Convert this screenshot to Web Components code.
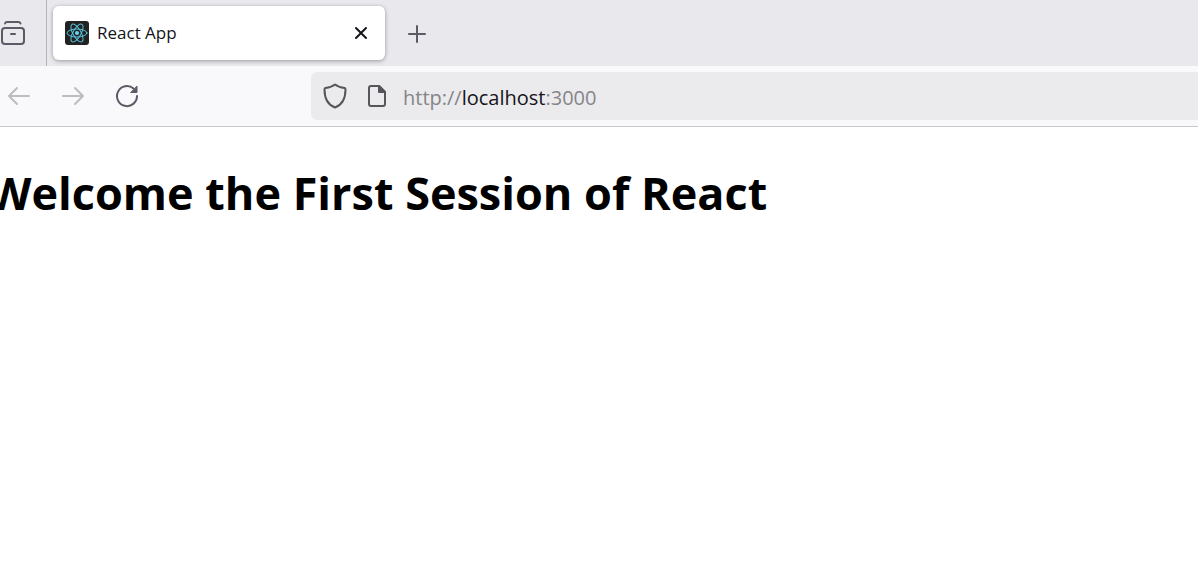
<!DOCTYPE html>
<html lang="en">
<head>
<meta charset="utf-8">
<title>React App</title>
<style>
  body { margin: 0; background: #fff; font-family: "Open Sans", "Noto Sans", sans-serif; color: #15141a; }
</style>
</head>
<body>
<browser-window>
  <tab-strip slot="tabs"><browser-tab>React App</browser-tab></tab-strip>
  <nav-toolbar slot="toolbar"><url-bar><span slot="scheme">http://</span><span slot="host">localhost</span><span slot="port">:3000</span></url-bar></nav-toolbar>
  <page-view><page-title>Welcome the First Session of React</page-title></page-view>
</browser-window>
<script>
const define = (name, html, setup) => customElements.define(name, class extends HTMLElement {
  constructor() {
    super();
    const t = document.createElement('template');
    t.innerHTML = html;
    this.attachShadow({ mode: 'open' }).append(t.content.cloneNode(true));
    if (setup) setup(this.shadowRoot, this);
  }
});
const button = `button { flex: none; display: grid; place-items: center; padding: 0; border: 0; background: none; color: #5b5b66; border-radius: 6px; }
  svg { display: block; fill: none; stroke: currentColor; stroke-width: 2; stroke-linecap: round; stroke-linejoin: round; }`;

define('browser-window', `
<style>
  :host { display: flex; flex-direction: column; min-height: 100vh; overflow: hidden; }
</style>
<slot name="tabs"></slot><slot name="toolbar"></slot><slot></slot>`);

define('tab-strip', `
<style>
  :host { display: flex; align-items: center; height: 66px; background: #e9e8ed; }
  ${button}
  .view { width: 46px; height: 66px; border-right: 1px solid #b4b3ba; border-radius: 0; justify-items: start; box-sizing: content-box; }
  .new { width: 48px; height: 48px; margin-left: 8px; padding-top: 2px; }
</style>
<button class="view" aria-label="Open recent browsing">
  <svg width="26" height="26" viewBox="0 0 26 26"><path d="M5 3.500Q5.500 2 7 2H18.500Q20 2 20.500 3.500"/><rect x="2" y="8" width="22" height="16" rx="3"/><path d="M11 14H15"/></svg>
</button>
<slot></slot>
<button class="new" aria-label="New tab">
  <svg width="20" height="20" viewBox="0 0 20 20"><path d="M10 2V18M2 10H18"/></svg>
</button>`);

define('browser-tab', `
<style>
  :host { display: flex; align-items: center; box-sizing: border-box; width: 332px; height: 54px; margin-left: 6px; padding: 0 8px 0 12px; background: #fff; border-radius: 6px; box-shadow: 0 1px 4px rgba(0,0,0,.35); font-size: 17px; line-height: 24px; }
  ${button}
  .label { flex: 1; margin-left: 8px; white-space: nowrap; }
  button { width: 32px; height: 32px; color: #15141a; }
  .logo { stroke: #58c4dc; stroke-width: 1; }
</style>
<svg class="logo" width="24" height="24" viewBox="0 0 24 24" aria-hidden="true">
  <rect width="24" height="24" rx="3" fill="#222222" stroke="none"/>
  <g><ellipse cx="12" cy="12" rx="10" ry="4"/><ellipse cx="12" cy="12" rx="10" ry="4" transform="rotate(60 12 12)"/><ellipse cx="12" cy="12" rx="10" ry="4" transform="rotate(120 12 12)"/></g>
  <circle cx="12" cy="12" r="2" fill="#61dafb" stroke="none"/>
</svg>
<span class="label"><slot></slot></span>
<button aria-label="Close tab"><svg width="14" height="14" viewBox="0 0 14 14"><path d="M2 2L12 12M12 2L2 12"/></svg></button>`);

define('nav-toolbar', `
<style>
  :host { display: flex; align-items: center; height: 60px; background: #f9f9fb; border-bottom: 1px solid #c8c8cc; }
  ${button}
  .group { flex: none; display: flex; gap: 6px; margin-left: -5px; }
  .group button { width: 48px; height: 48px; }
  button:disabled { color: #bdbdc1; }
  .spring { flex: none; width: 160px; }
  slot { display: flex; flex: 1; }
</style>
<div class="group">
  <button disabled aria-label="Back"><svg width="24" height="24" viewBox="0 0 24 24"><path d="M22 12H2M10 4L2 12L10 20"/></svg></button>
  <button disabled aria-label="Forward"><svg width="24" height="24" viewBox="0 0 24 24"><path d="M2 12H22M14 4L22 12L14 20"/></svg></button>
  <button aria-label="Reload"><svg width="24" height="24" viewBox="0 0 24 24"><path d="M22 12A10 10 0 1 1 18.500 4.500"/><path d="M22 2.500V8.500H16Z" fill="currentColor" stroke-width="1"/></svg></button>
</div>
<div class="spring"></div>
<slot></slot>`);

define('url-bar', `
<style>
  :host { display: flex; align-items: center; flex: 1; min-width: 0; height: 48px; background: #ebebed; border-radius: 6px 0 0 6px; padding-left: 3px; }
  ${button}
  button { width: 42px; height: 42px; color: #55555c; }
  .field { position: relative; flex: 1; min-width: 0; height: 48px; margin-left: 5px; font-size: 20px; line-height: 28px; }
  input { box-sizing: border-box; width: 100%; height: 48px; padding: 4px 0 0; border: 0; outline: 0; background: none; font: inherit; color: #15141a; }
  /* The formatted address lies over the field until the user edits it. */
  .shown { position: absolute; inset: 0; display: flex; align-items: center; padding-top: 4px; pointer-events: none; color: #85858a; white-space: pre; }
  input:focus + .shown { visibility: hidden; }
  .host { color: #15141a; }
</style>
<button aria-label="Tracking protection"><svg width="26" height="26" viewBox="0 0 26 26"><path d="M13 1.500C10.500 3.500 7 4.500 3.500 5Q2.500 5.300 2.500 6.500C2.500 15 5 21.500 13 24.500C21 21.500 23.500 15 23.500 6.500Q23.500 5.300 22.500 5C19 4.500 15.500 3.500 13 1.500Z"/></svg></button>
<button aria-label="Site information"><svg width="24" height="24" viewBox="0 0 24 24"><path d="M14 2H6Q4 2 4 4V20Q4 22 6 22H18Q20 22 20 20V8Z"/><path d="M14 2V8H20Z" fill="currentColor"/></svg></button>
<div class="field">
  <input type="text" aria-label="Address" spellcheck="false">
  <div class="shown"><slot name="scheme"></slot><span class="host"><slot name="host"></slot></span><slot name="port"></slot></div>
</div>`, (root, host) => {
  const input = root.querySelector('input');
  input.addEventListener('focus', () => { input.value = host.textContent.trim(); });
  input.addEventListener('blur', () => { input.value = ''; });
});

define('page-view', `
<style>
  :host { display: block; flex: 1; background: #fff; padding: 32px 0; margin-left: -12px; }
</style>
<slot></slot>`);

define('page-title', `
<style>
  :host { display: block; }
  h1 { margin: 0; font-size: 45px; line-height: 68px; font-weight: 700; color: #000; white-space: nowrap; }
</style>
<h1><slot></slot></h1>`);
</script>
</body>
</html>
